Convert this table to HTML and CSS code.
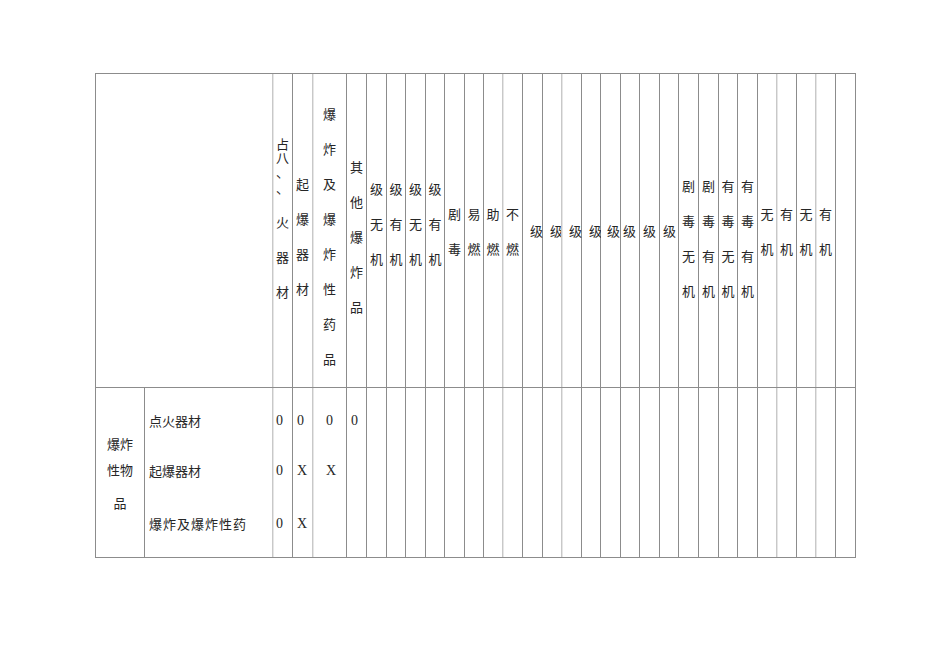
FILE: index.html
```html
<!DOCTYPE html>
<html lang="zh-CN">
<head>
<meta charset="utf-8">
<title>危险货物配装表</title>
<link rel="stylesheet" href="styles.css">
</head>
<body>
<div class="page">
  <div class="sheet">
    <!-- header row -->
    <div class="cell corner"></div>
    <div class="cell h lt c3">
      <div class="k k14">占</div>
      <div class="k k14">八</div>
      <div class="k k14">、</div>
      <div class="k k18">、</div>
      <div class="k k35 kf">火</div>
      <div class="k k35">器</div>
      <div class="k k35">材</div>
    </div>
    <div class="cell h t92"><div class="v">起爆器材</div></div>
    <div class="cell h lt t22"><div class="v">爆炸及爆炸性药品</div></div>
    <div class="cell h t75"><div class="v">其他爆炸品</div></div>
    <div class="cell h t97"><div class="v">级无机</div></div>
    <div class="cell h t97"><div class="v">级有机</div></div>
    <div class="cell h t97"><div class="v">级无机</div></div>
    <div class="cell h t97"><div class="v">级有机</div></div>
    <div class="cell h t122"><div class="v">剧毒</div></div>
    <div class="cell h t122"><div class="v">易燃</div></div>
    <div class="cell h t122"><div class="v">助燃</div></div>
    <div class="cell h lt t122"><div class="v">不燃</div></div>
    <div class="cell h t139"><div class="v m7">级</div></div>
    <div class="cell h t139"><div class="v m7">级</div></div>
    <div class="cell h lt t139"><div class="v m7">级</div></div>
    <div class="cell h t139"><div class="v m7">级</div></div>
    <div class="cell h t139"><div class="v m6">级</div></div>
    <div class="cell h t139"><div class="v m2">级</div></div>
    <div class="cell h t139"><div class="v m3">级</div></div>
    <div class="cell h t139"><div class="v m3">级</div></div>
    <div class="cell h t94"><div class="v">剧毒无机</div></div>
    <div class="cell h t94"><div class="v">剧毒有机</div></div>
    <div class="cell h t94"><div class="v">有毒无机</div></div>
    <div class="cell h t94"><div class="v">有毒有机</div></div>
    <div class="cell h t122"><div class="v">无机</div></div>
    <div class="cell h lt t122"><div class="v">有机</div></div>
    <div class="cell h t122"><div class="v">无机</div></div>
    <div class="cell h lt t122"><div class="v">有机</div></div>
    <div class="cell h"></div>

    <!-- body row -->
    <div class="cell b-cat">爆炸<br>性物<div class="p">品</div></div>
    <div class="cell b-lab">
      <div class="ln">点火器材</div>
      <div class="ln">起爆器材</div>
      <div class="ln ln3 wide">爆炸及爆炸性药</div>
    </div>
    <div class="cell d lt p3">
      <div class="ln">0</div>
      <div class="ln">0</div>
      <div class="ln ln3">0</div>
    </div>
    <div class="cell d p4">
      <div class="ln">0</div>
      <div class="ln">X</div>
      <div class="ln ln3">X</div>
    </div>
    <div class="cell d lt p13">
      <div class="ln">0</div>
      <div class="ln">X</div>
    </div>
    <div class="cell d p4">
      <div class="ln">0</div>
    </div>
    <div class="cell"></div>
    <div class="cell"></div>
    <div class="cell"></div>
    <div class="cell"></div>
    <div class="cell"></div>
    <div class="cell"></div>
    <div class="cell"></div>
    <div class="cell lt"></div>
    <div class="cell"></div>
    <div class="cell"></div>
    <div class="cell lt"></div>
    <div class="cell"></div>
    <div class="cell"></div>
    <div class="cell"></div>
    <div class="cell"></div>
    <div class="cell"></div>
    <div class="cell"></div>
    <div class="cell"></div>
    <div class="cell"></div>
    <div class="cell"></div>
    <div class="cell"></div>
    <div class="cell lt"></div>
    <div class="cell"></div>
    <div class="cell lt"></div>
    <div class="cell"></div>
  </div>
</div>
</body>
</html>
```

FILE: styles.css
```css
html, body {
  margin: 0;
  padding: 0;
  background: #ffffff;
}

body {
  font-family: "Noto Sans CJK SC", "Noto Sans CJK JP", sans-serif;
  color: #262626;
}

.page {
  padding: 73px 0 0 95px;
}

.sheet {
  display: grid;
  grid-template-columns:
    48px 127px 19px 19px 33px 19px
    19px 18px 19px 18px 19px 18px 18px 19px 19px 18px 19px 18px 19px
    18px 19px 18px 19px 19px 18px 19px 18px 19px 18px 19px 19px;
  grid-template-rows: 313px 169px;
  gap: 1px;
  padding: 1px;
  background: #8c8c8c;
  width: max-content;
}

.cell {
  background: #ffffff;
  font-size: 13px;
  min-width: 0;
}

/* lighter (anti-aliased) grid lines */
.lt {
  box-shadow: -1px 0 0 #c8c8c8, inset 1px 0 0 #e6e6e6;
}

.corner {
  grid-column: 1 / 3;
}

/* header cells: characters stacked one per line */
.h {
  line-height: 35px;
}

.v {
  width: 13px;
  margin: 0 auto;
  text-align: center;
}

.v.m7 { margin-left: 7px; }
.v.m6 { margin-left: 6px; }
.v.m3 { margin-left: 3px; }
.v.m2 { margin-left: 2px; }

.t22 { padding-top: 22px; }
.t75 { padding-top: 75px; }
.t92 { padding-top: 92px; }
.t94 { padding-top: 94px; }
.t97 { padding-top: 97px; }
.t122 { padding-top: 122px; }
.t139 { padding-top: 139px; }

/* first stacked header column */
.c3 {
  padding-top: 63px;
}

.k {
  width: 13px;
  margin: 0 auto;
  text-align: center;
}

.k14 { line-height: 14px; }
.k18 { line-height: 18px; }
.k35 { line-height: 35px; }
.kf { margin-top: 7px; }

/* body row */
.b-cat {
  padding-top: 43px;
  line-height: 26px;
  text-align: center;
}

.b-cat .p {
  margin-top: 7px;
}

.b-lab {
  padding: 8px 0 0 4px;
}

.ln {
  height: 50px;
  line-height: 50px;
  white-space: nowrap;
}

.ln3 {
  margin-top: 3px;
}

.wide {
  letter-spacing: 1px;
}

.d {
  padding-top: 8px;
  font-family: "Liberation Serif", serif;
  font-size: 14px;
}

.p3 { padding-left: 3px; }
.p4 { padding-left: 4px; }
.p13 { padding-left: 13px; }
```
